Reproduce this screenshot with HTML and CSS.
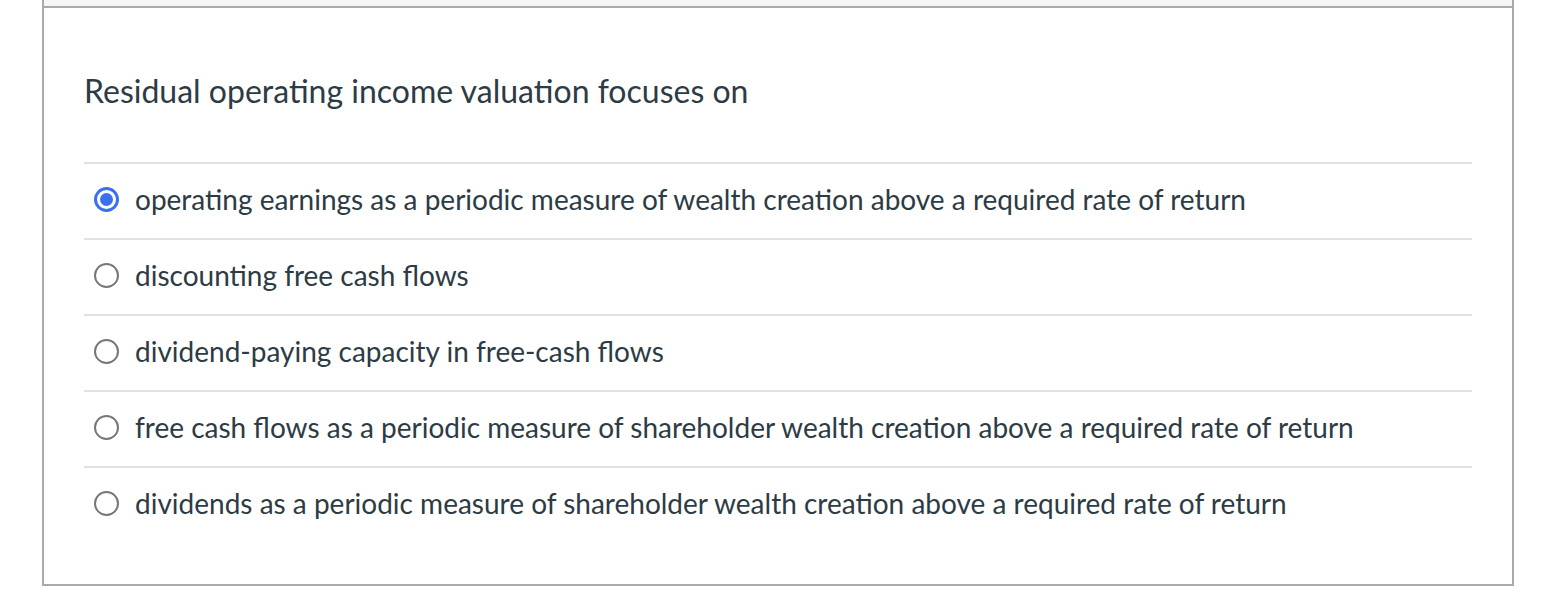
FILE: index.html
```
<!DOCTYPE html>
<html>
<head>
<meta charset="utf-8">
<link rel="stylesheet" href="styles.css">
</head>
<body>
<div class="card">
  <div class="card-head"></div>
  <div class="card-body">
    <div class="question">Residual operating income valuation focuses on</div>
    <div class="answers">
      <div class="answer"><span class="radio checked"></span><span class="label">operating earnings as a periodic measure of wealth creation above a required rate of return</span></div>
      <div class="answer"><span class="radio"></span><span class="label">discounting free cash flows</span></div>
      <div class="answer"><span class="radio"></span><span class="label">dividend-paying capacity in free-cash flows</span></div>
      <div class="answer"><span class="radio"></span><span class="label">free cash flows as a periodic measure of shareholder wealth creation above a required rate of return</span></div>
      <div class="answer"><span class="radio"></span><span class="label">dividends as a periodic measure of shareholder wealth creation above a required rate of return</span></div>
    </div>
  </div>
</div>
</body>
</html>
```
FILE: styles.css
```
html, body {
  margin: 0;
  padding: 0;
  background: #ffffff;
}
body {
  font-family: Lato, "Open Sans", sans-serif;
  color: #2d3b45;
  padding-left: 42px;
  width: 1472px;
}
.card {
  border: 2px solid #aaaaaa;
  border-top: none;
  background: #fff;
}
.card-head {
  height: 6px;
  background: #f5f5f5;
  border-bottom: 2px solid #aaaaaa;
}
.card-body {
  padding: 61px 40px 42px 40px;
}
.question {
  font-size: 32px;
  line-height: 44px;
  margin-bottom: 49px;
}
.answers {
  display: flex;
  flex-direction: column;
}
.answer {
  box-sizing: border-box;
  border-top: 2px solid #e2e2e2;
  height: 76px;
  display: flex;
  align-items: center;
  padding-left: 10px;
  padding-bottom: 4px;
  font-size: 28px;
}
.radio {
  box-sizing: border-box;
  width: 25px;
  height: 25px;
  border-radius: 50%;
  border: 2px solid #767676;
  margin-right: 16px;
  flex: none;
  position: relative;
}
.radio.checked {
  border: 3px solid #3a70ee;
}
.radio.checked::after {
  content: "";
  position: absolute;
  left: 3px;
  top: 3px;
  width: 13px;
  height: 13px;
  border-radius: 50%;
  background: #3a70ee;
}
```
